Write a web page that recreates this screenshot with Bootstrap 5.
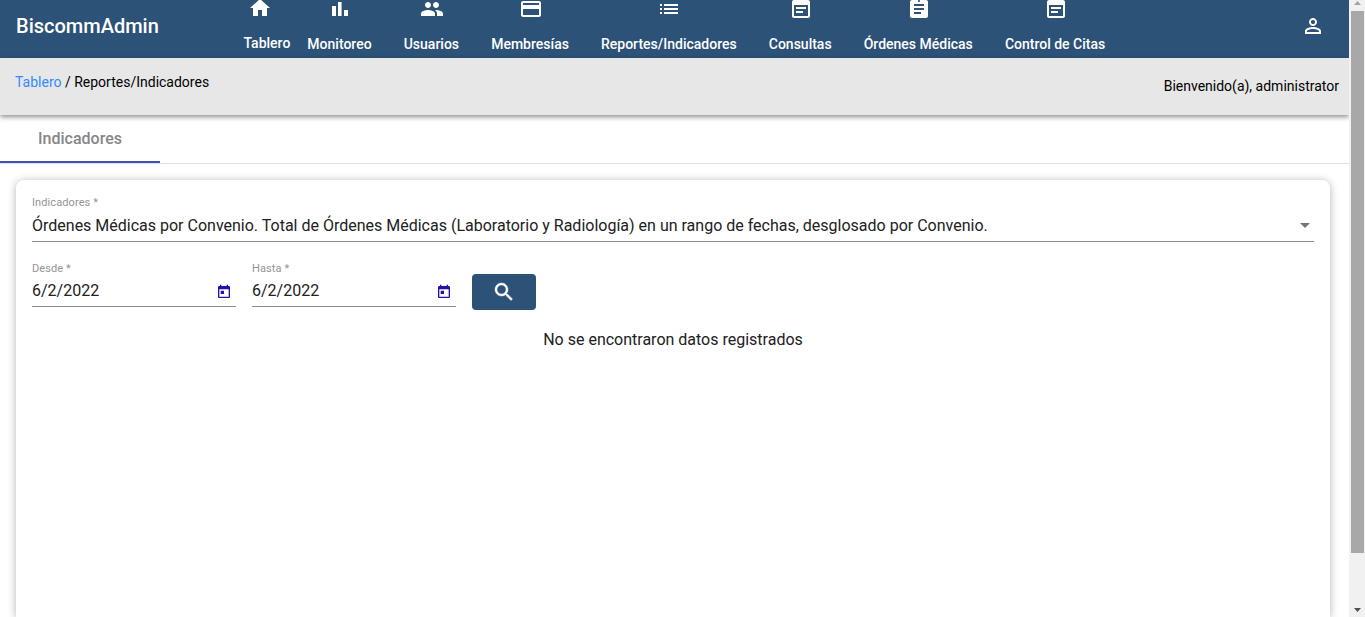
<!DOCTYPE html>
<html lang="es">
<head>
<meta charset="utf-8">
<title>BiscommAdmin</title>
<meta name="viewport" content="width=device-width, initial-scale=1">
<link href="https://cdn.jsdelivr.net/npm/bootstrap@5.3.0/dist/css/bootstrap.min.css" rel="stylesheet">
<style>
body{font-family:Roboto,sans-serif;font-size:14px;line-height:20px;color:#000;background:#fff}
svg{fill:currentColor;display:block;flex:none}
.shell{height:100vh}
.topbar{height:58px;background:#2c5278;padding:0 24px 0 16px}
.brand{width:219.5px;font-size:20px;font-weight:500;line-height:52px}
.menu{font-weight:500;line-height:20px}
.menu a{padding:0 16px;margin-top:-3px;gap:13px;color:#fff}
.menu a + a + a{padding-left:16.100px}
.menu a svg{width:24px;height:24px;margin-left:1px}
.menu a.first-item{padding:0 1px 0 8px;margin-top:-4px}
.menu a.first-item svg{margin-right:14px}
.user-icon{margin-top:14px}
.crumbs{height:57px;background:#e7e7e7;padding:14px 10px 0 15px;box-shadow:0 2px 5px rgba(0,0,0,.45);z-index:1}
.crumbs a{color:#2f8cff}
.tabs{height:49px;border-bottom:1px solid #e0e0e0}
.tabs a{width:160px;height:48px;border-bottom:2px solid #3f51b5;font-size:16px;font-weight:500;line-height:47px;color:#868686}
.panel{margin:16px 19px 0 16px;padding:16px;border-radius:8px 8px 0 0;box-shadow:0 1px 8px rgba(0,0,0,.3);background:#fff;font-size:16px;line-height:20px;color:#212121}
.field{border-bottom:1px solid #8c8c8c;height:46px}
.caption-text{font-size:11px;line-height:12px;letter-spacing:.1px;color:#949494;padding-top:1px}
.value{margin-top:7px}
.date-field{width:204px;height:45px}
.date-field .value{margin-top:6px}
.date-field svg{color:#1f12a6;margin-right:4px;margin-top:2px}
.dates{margin-top:20px}
.search-btn{width:64px;height:36px;margin-top:12px;background:#2c5278;border-radius:4px}
.empty-note{margin-top:20px}
.arrow{margin:-2px 4px 0 0;color:#757575}
.scroller{width:16px;background:#f1f1f1;padding-left:2px}
.thumb{width:13px;height:542px;background:#a8a8a8}
</style>
</head>
<body>
<div class="shell d-flex overflow-hidden">
 <div class="flex-grow-1 d-flex flex-column overflow-hidden">
  <header class="topbar d-flex text-white flex-shrink-0">
   <div class="brand">BiscommAdmin</div>
   <nav class="menu d-flex text-nowrap align-items-start">
    <a class="first-item d-flex flex-column align-items-center text-decoration-none"><svg viewBox="0 0 24 24"><path d="M10 20v-6h4v6h5v-8h3L12 3 2 12h3v8z"/></svg><span>Tablero</span></a>
    <a class="d-flex flex-column align-items-center text-decoration-none"><svg viewBox="0 0 24 24"><path d="M4 9h4v10H4zm6-4h3.6v14H10zm6 8h4v6h-4z"/></svg><span>Monitoreo</span></a>
    <a class="d-flex flex-column align-items-center text-decoration-none"><svg viewBox="0 0 24 24"><path d="M16 11c1.66 0 2.99-1.34 2.99-3S17.66 5 16 5s-3 1.34-3 3 1.34 3 3 3zm-8 0c1.66 0 2.99-1.34 2.99-3S9.66 5 8 5 5 6.34 5 8s1.34 3 3 3zm0 2c-2.33 0-7 1.17-7 3.5V19h14v-2.5C15 14.17 10.33 13 8 13zm8 0c-.29 0-.62.02-.97.05 1.16.84 1.97 1.97 1.97 3.45V19h6v-2.5c0-2.33-4.67-3.5-7-3.5z"/></svg><span>Usuarios</span></a>
    <a class="d-flex flex-column align-items-center text-decoration-none"><svg viewBox="0 0 24 24"><path d="M20 4H4c-1.11 0-1.99.89-1.99 2L2 18c0 1.11.89 2 2 2h16c1.11 0 2-.89 2-2V6c0-1.11-.89-2-2-2zm0 14H4v-6h16v6zm0-10H4V6h16v2z"/></svg><span>Membresías</span></a>
    <a class="d-flex flex-column align-items-center text-decoration-none"><svg viewBox="0 0 24 24"><path d="M3 13h2v-2H3v2zm0 4h2v-2H3v2zm0-8h2V7H3v2zm4 4h14v-2H7v2zm0 4h14v-2H7v2zM7 7v2h14V7H7z"/></svg><span>Reportes/Indicadores</span></a>
    <a class="d-flex flex-column align-items-center text-decoration-none"><svg viewBox="0 0 24 24"><path d="M17 10H7v2h10v-2zm2-7h-1V1h-2v2H8V1H6v2H5c-1.11 0-1.99.9-1.99 2L3 19c0 1.1.89 2 2 2h14c1.1 0 2-.9 2-2V5c0-1.1-.9-2-2-2zm0 16H5V8h14v11zm-5-5H7v2h7v-2z"/></svg><span>Consultas</span></a>
    <a class="d-flex flex-column align-items-center text-decoration-none"><svg viewBox="0 0 24 24"><path d="M19 3h-4.18C14.4 1.84 13.3 1 12 1s-2.4.84-2.82 2H5c-1.1 0-2 .9-2 2v14c0 1.1.9 2 2 2h14c1.1 0 2-.9 2-2V5c0-1.1-.9-2-2-2zm-7 0c.55 0 1 .45 1 1s-.45 1-1 1-1-.45-1-1 .45-1 1-1zm2 14H7v-2h7v2zm3-4H7v-2h10v2zm0-4H7V7h10v2z"/></svg><span>Órdenes Médicas</span></a>
    <a class="d-flex flex-column align-items-center text-decoration-none"><svg viewBox="0 0 24 24"><path d="M17 10H7v2h10v-2zm2-7h-1V1h-2v2H8V1H6v2H5c-1.11 0-1.99.9-1.99 2L3 19c0 1.1.89 2 2 2h14c1.1 0 2-.9 2-2V5c0-1.1-.9-2-2-2zm0 16H5V8h14v11zm-5-5H7v2h7v-2z"/></svg><span>Control de Citas</span></a>
   </nav>
   <svg class="user-icon ms-auto" width="24" height="24" viewBox="0 0 24 24"><path d="M12 5.9c1.16 0 2.1.94 2.1 2.1s-.94 2.1-2.1 2.1S9.9 9.16 9.9 8s.94-2.1 2.1-2.1m0 9c2.97 0 6.1 1.46 6.1 2.1v1.1H5.9V17c0-.64 3.13-2.1 6.1-2.1M12 4C9.79 4 8 5.79 8 8s1.79 4 4 4 4-1.79 4-4-1.79-4-4-4zm0 9c-2.67 0-8 1.34-8 4v3h16v-3c0-2.66-5.33-4-8-4z"/></svg>
  </header>
  <div class="crumbs d-flex justify-content-between position-relative flex-shrink-0">
   <div><a class="text-decoration-none">Tablero</a> / Reportes/Indicadores</div>
   <div class="pt-1">Bienvenido(a), administrator</div>
  </div>
  <div class="tabs flex-shrink-0"><a class="d-block text-center text-decoration-none">Indicadores</a></div>
  <main class="panel flex-grow-1">
   <div class="field">
    <div class="caption-text">Indicadores *</div>
    <div class="value d-flex justify-content-between align-items-center"><span>Órdenes Médicas por Convenio. Total de Órdenes Médicas (Laboratorio y Radiología) en un rango de fechas, desglosado por Convenio.</span>
    <svg class="arrow" width="10" height="5" viewBox="0 0 10 5"><path d="M0 0h10L5 5z"/></svg></div>
   </div>
   <div class="dates d-flex gap-3">
    <div class="field date-field"><div class="caption-text">Desde *</div>
     <div class="value d-flex justify-content-between align-items-center"><span>6/2/2022</span><svg width="16" height="16" viewBox="0 0 24 24"><path d="M19 3h-1V1h-2v2H8V1H6v2H5c-1.11 0-1.99.9-1.99 2L3 19c0 1.1.89 2 2 2h14c1.1 0 2-.9 2-2V5c0-1.1-.9-2-2-2zm0 16H5V8h14v11zM7 10h5v5H7z"/></svg></div></div>
    <div class="field date-field"><div class="caption-text">Hasta *</div>
     <div class="value d-flex justify-content-between align-items-center"><span>6/2/2022</span><svg width="16" height="16" viewBox="0 0 24 24"><path d="M19 3h-1V1h-2v2H8V1H6v2H5c-1.11 0-1.99.9-1.99 2L3 19c0 1.1.89 2 2 2h14c1.1 0 2-.9 2-2V5c0-1.1-.9-2-2-2zm0 16H5V8h14v11zM7 10h5v5H7z"/></svg></div></div>
    <button class="search-btn btn border-0 p-0 text-white d-flex justify-content-center align-items-center" aria-label="Buscar"><svg width="24" height="24" viewBox="0 0 24 24" stroke="currentColor" stroke-width=".4"><path d="M15.5 14h-.79l-.28-.27C15.41 12.59 16 11.11 16 9.5 16 5.91 13.09 3 9.5 3S3 5.91 3 9.5 5.91 16 9.5 16c1.61 0 3.09-.59 4.23-1.57l.27.28v.79l5 4.99L20.49 19l-4.99-5zm-6 0C7.01 14 5 11.99 5 9.5S7.01 5 9.5 5 14 7.01 14 9.5 11.99 14 9.5 14z"/></svg></button>
   </div>
   <div class="empty-note text-center">No se encontraron datos registrados</div>
  </main>
 </div>
 <div class="scroller d-flex flex-column flex-shrink-0">
  <svg width="13" height="11" viewBox="0 0 13 11" color="#a3a3a3"><path d="M3 5h7L6.500 1z"/></svg>
  <div class="thumb"></div>
  <svg class="mt-auto" width="13" height="12" viewBox="0 0 13 12" color="#505050"><path d="M3 3h7L6.500 7z"/></svg>
 </div>
</div>
<script src="https://cdn.jsdelivr.net/npm/bootstrap@5.3.0/dist/js/bootstrap.bundle.min.js"></script>
</body>
</html>
